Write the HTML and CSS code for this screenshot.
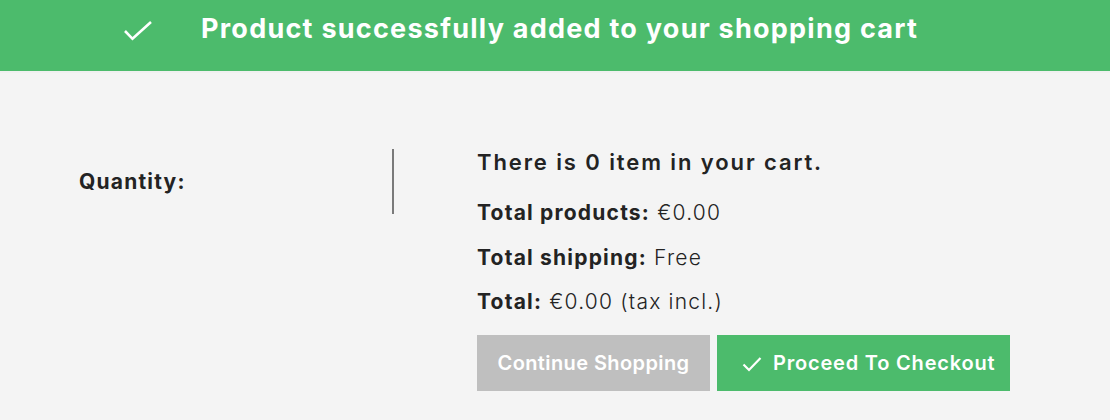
FILE: index.html
```html
<!DOCTYPE html>
<html>
<head>
<meta charset="utf-8">
<link rel="stylesheet" href="styles.css">
</head>
<body>
<div class="modal">
  <header class="banner">
    <svg class="banner-icon" width="30" height="22" viewBox="0 0 30 22"><path d="M2 11 L9.5 18.8 L28 2" fill="none" stroke="#fff" stroke-width="2.6"/></svg>
    <h4 class="banner-title">Product successfully added to your shopping cart</h4>
  </header>
  <div class="content">
    <div class="product-col">
      <div class="qty"><strong>Quantity:</strong></div>
    </div>
    <div class="cart-col">
      <p class="cart-count">There is 0 item in your cart.</p>
      <p class="line"><strong>Total products:</strong> €0.00</p>
      <p class="line"><strong>Total shipping:</strong> Free</p>
      <p class="line"><strong>Total:</strong> €0.00 (tax incl.)</p>
      <div class="actions">
        <button class="btn btn-secondary">Continue Shopping</button>
        <button class="btn btn-primary"><svg class="btn-icon" width="20" height="16" viewBox="0 0 20 16"><path d="M1.5 8.5 L7 14 L18.5 2" fill="none" stroke="#fff" stroke-width="2.2"/></svg>Proceed To Checkout</button>
      </div>
    </div>
  </div>
</div>
</body>
</html>
```
FILE: styles.css
```css
html, body {
  margin: 0;
  padding: 0;
  background: #f4f4f4;
  font-family: Inter, "Open Sans", sans-serif;
  color: #232323;
}
.modal {
  width: 1110px;
  height: 420px;
  overflow: hidden;
}
.banner {
  height: 71px;
  background: #4cbb6c;
  border-bottom: 2px solid #f0f0f0;
  display: flex;
  align-items: flex-start;
  padding-left: 123px;
  box-sizing: content-box;
}
.banner-icon {
  margin-top: 20px;
  flex: none;
}
.banner-title {
  margin: 13px 0 0 48px;
  color: #fff;
  font-size: 27px;
  line-height: 32px;
  font-weight: 700;
  letter-spacing: 1.25px;
  white-space: nowrap;
}
.content {
  display: grid;
  grid-template-columns: 394px 1fr;
  align-items: start;
  padding-top: 75px;
}
.product-col {
  border-right: 2px solid #7a7a7a;
  height: 65px;
  margin-top: 1px;
  padding-left: 79px;
  box-sizing: border-box;
}
.qty {
  font-size: 21px;
  line-height: 26px;
  letter-spacing: 1.2px;
  padding-top: 20px;
}
.cart-col {
  padding-left: 83px;
}
.cart-count {
  margin: 0 0 15px;
  font-size: 22px;
  font-weight: 600;
  line-height: 28px;
  letter-spacing: 1.9px;
  white-space: nowrap;
}
.line {
  margin: 0;
  font-size: 21px;
  line-height: 44.5px;
  font-weight: 300;
  letter-spacing: 1.2px;
  white-space: nowrap;
}
.line strong {
  font-weight: 700;
}
.actions {
  display: flex;
  gap: 7px;
  margin-top: 10px;
}
.btn {
  height: 56px;
  border: 0;
  color: #fff;
  font-family: inherit;
  font-size: 20px;
  font-weight: 600;
  letter-spacing: 0.4px;
  display: flex;
  align-items: center;
  padding: 0;
  white-space: nowrap;
}
.btn-secondary {
  width: 233px;
  background: #bfbfbf;
  justify-content: center;
}
.btn-primary {
  width: 293px;
  background: #4cbb6c;
  justify-content: flex-start;
  padding-left: 25px;
  letter-spacing: 0.8px;
}
.btn-icon {
  margin-right: 11px;
  margin-top: 2px;
  flex: none;
}
```
